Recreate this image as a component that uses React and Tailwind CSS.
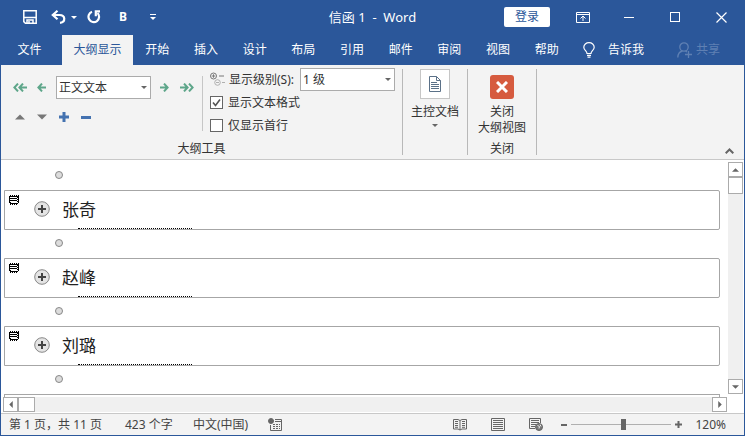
import { useState } from "react";

const TABS = ["开始", "插入", "设计", "布局", "引用", "邮件", "审阅", "视图", "帮助"];
const HEADINGS = ["张奇", "赵峰", "刘璐"];

function Triangle({ dir = "down", className = "" }) {
  const points = {
    down: "0,0 10,0 5,5",
    up: "0,5 10,5 5,0",
    left: "5,0 5,10 0,5",
    right: "0,0 0,10 5,5",
  };
  const box = dir === "left" || dir === "right" ? "0 0 5 10" : "0 0 10 5";
  return (
    <svg viewBox={box} className={className} fill="currentColor" aria-hidden="true">
      <polygon points={points[dir]} />
    </svg>
  );
}

function TitleBar() {
  const windowButton = "flex h-full w-[46px] items-center justify-center";
  return (
    <header className="grid h-[34px] grid-cols-[1fr_auto_1fr] items-center text-white">
      <div className="flex items-center pl-[22px]">
        <button aria-label="保存" className="mr-3">
          <svg className="size-[14px]" viewBox="0 0 14 14" fill="none" stroke="currentColor" strokeWidth="1.5">
            <path d="M.8.8h12.400v12.400H2.400L.8 11.600z" />
            <path d="M1 7.500h12" />
            <path d="M4 13v-3h6v3" />
            <path d="M6 11v2" />
          </svg>
        </button>
        <button aria-label="撤消" className="mr-[5px] ml-[2px]">
          <svg className="h-[14px] w-[15px]" viewBox="0 0 15 14" fill="none" stroke="currentColor" strokeWidth="2.200">
            <path d="M6.500.8 1.800 5l4.700 4.200" />
            <path d="M2 5h6.500c6 0 6.500 7 .5 7.800" />
          </svg>
        </button>
        <button aria-label="撤消选项" className="mr-[10px]">
          <Triangle className="h-[3px] w-[6px]" />
        </button>
        <button aria-label="重复" className="mr-[17px]">
          <svg className="h-[14px] w-[14px]" viewBox="0 0 14 14" fill="none" stroke="currentColor" strokeWidth="2.200">
            <path d="M5 1.800A5.300 5.300 0 1 0 10.500 3" />
            <path d="M13 1.300H8.800v5" />
          </svg>
        </button>
        <button aria-label="加粗" className="mr-[22px] w-[10px] text-[12px] leading-4 font-bold">
          B
        </button>
        <button aria-label="自定义快速访问工具栏" className="flex flex-col items-center gap-[2px]">
          <span className="h-px w-[6px] bg-white" />
          <Triangle className="h-[3px] w-[6px]" />
        </button>
      </div>
      <h1 className="text-[13px] leading-4 whitespace-pre">信函 1  -  Word</h1>
      <div className="flex h-full items-center justify-end">
        <button className="mr-[10px] h-5 w-[46px] rounded-[2px] bg-white text-[12px] leading-5 text-[#2b579a]">登录</button>
        <button aria-label="功能区显示选项" className={windowButton}>
          <svg className="h-[11px] w-[14px]" viewBox="0 0 14 11" fill="none" stroke="currentColor">
            <path d="M.5.5h13v10H.5zM.5 2.500h13M7 9V4M4.500 6.500 7 4l2.500 2.500" />
          </svg>
        </button>
        <button aria-label="最小化" className={windowButton}>
          <span className="h-px w-[10px] bg-white" />
        </button>
        <button aria-label="最大化" className={windowButton}>
          <span className="size-[10px] border border-white" />
        </button>
        <button aria-label="关闭窗口" className={windowButton}>
          <svg className="size-[11px]" viewBox="0 0 11 11" stroke="currentColor" strokeWidth="1.2">
            <path d="m.5.5 10 10M10.500.5l-10 10" />
          </svg>
        </button>
      </div>
    </header>
  );
}

function TabRow() {
  return (
    <nav className="flex h-[31px] items-stretch pt-px text-[12px] leading-4 text-white">
      <button className="w-[61px] pr-1">文件</button>
      <button className="w-[71px] bg-[#f3f3f3] text-[#2b579a]">大纲显示</button>
      <div className="grid w-[438px] grid-cols-9">
        {TABS.map((tab) => (
          <button key={tab}>{tab}</button>
        ))}
      </div>
      <button className="ml-3 flex items-center gap-[13px]">
        <svg className="h-4 w-3" viewBox="0 0 12 16" fill="none" stroke="currentColor" strokeWidth="1.2">
          <path d="M4 11.500C4 9 .8 8.200.8 5.200a5.200 4.600 0 0 1 10.400 0C11.200 8.200 8 9 8 11.500zM4 13.300h4M4.500 15.200h3" />
        </svg>
        告诉我
      </button>
      <button disabled className="mr-6 ml-auto flex items-center gap-1 text-[#5f80b3]">
        <svg className="h-4 w-[15px]" viewBox="0 0 15 16" fill="none" stroke="currentColor" strokeWidth="1.3">
          <circle cx="7" cy="5" r="4.200" />
          <path d="M.8 15.500C1 11.500 3 9.500 5.500 9M8.500 9l1.500 1M8 12.500h7M11.500 9v7" />
        </svg>
        共享
      </button>
    </nav>
  );
}

function Arrow({ double, flip, label }) {
  return (
    <button aria-label={label} className="text-[#5ea68a]">
      <svg
        className={`${double ? "w-[14px]" : "w-[9px]"} h-[9px] ${flip ? "rotate-180" : ""}`}
        viewBox={double ? "0 0 14 9" : "0 0 9 9"}
        fill="none"
        stroke="currentColor"
        strokeWidth="2"
      >
        {double ? (
          <path d="M5 .6 1.400 4.500 5 8.400M10 .6 6.400 4.500 10 8.400M6.500 4.500H14" />
        ) : (
          <path d="M5 .6 1.400 4.500 5 8.400M1.500 4.500H9" />
        )}
      </svg>
    </button>
  );
}

function Select({ id, label, options }) {
  return (
    <div className="relative">
      <select
        id={id}
        aria-label={label}
        className="block h-[23px] w-[95px] appearance-none border border-[#ababab] bg-white pl-[2px] text-[12px] leading-4 text-[#333]"
      >
        {options.map((option) => (
          <option key={option}>{option}</option>
        ))}
      </select>
      <Triangle className="pointer-events-none absolute top-[10px] right-1 h-[3px] w-[6px] text-[#666]" />
    </div>
  );
}

function Check({ label, defaultChecked }) {
  return (
    <label className="flex h-[23px] items-center gap-[5px]">
      <span className="grid size-[13px]">
        <input
          type="checkbox"
          defaultChecked={defaultChecked}
          className="peer col-start-1 row-start-1 size-[13px] appearance-none border border-[#666] bg-white"
        />
        <svg
          className="pointer-events-none invisible col-start-1 row-start-1 size-[13px] peer-checked:visible"
          viewBox="0 0 13 13"
          fill="none"
          stroke="#555"
          strokeWidth="1.600"
        >
          <path d="m3 6.500 2.500 3L10 3.500" />
        </svg>
      </span>
      {label}
    </label>
  );
}

function Ribbon() {
  return (
    <section className="flex h-[95px] border-b border-[#c8c8c8] bg-[#f3f3f3] text-[12px] leading-4 text-[#333]">
      <div className="flex w-[401px] flex-col justify-between pt-[3px] pb-[2px]">
        <div className="flex">
          <div className="flex w-[201px] flex-col gap-[13px] pt-2 pl-3">
            <div className="flex items-center">
              <Arrow double label="提升至标题 1" />
              <span className="w-[10px]" />
              <Arrow label="升级" />
              <span className="w-[10px]" />
              <Select id="outline-level" label="大纲级别" options={["正文文本", "1 级", "2 级"]} />
              <span className="w-[9px]" />
              <Arrow flip label="降级" />
              <span className="w-[11px]" />
              <Arrow double flip label="降级为正文" />
            </div>
            <div className="flex items-center gap-3 pl-[2px] text-[#777]">
              <button aria-label="上移">
                <Triangle dir="up" className="h-[6px] w-[10px]" />
              </button>
              <button aria-label="下移">
                <Triangle className="h-[6px] w-[10px]" />
              </button>
              <button aria-label="展开" className="text-[#4472b0]">
                <svg className="size-[10px]" viewBox="0 0 10 10" stroke="currentColor" strokeWidth="3">
                  <path d="M5 0v10M0 5h10" />
                </svg>
              </button>
              <button aria-label="折叠" className="flex h-[10px] items-center">
                <span className="h-[3px] w-[10px] bg-[#4472b0]" />
              </button>
            </div>
          </div>
          <div className="mt-2 h-[55px] w-px bg-[#c6c6c6]" />
          <div className="flex flex-col pl-[7px]">
            <div className="flex items-center">
              <svg className="mr-1 h-[15px] w-[15px]" viewBox="0 0 15 15" fill="none" stroke="#777">
                <circle cx="3.500" cy="4" r="3" />
                <path d="M1.800 4h3.400M3.500 2.300v3.400M9 4h5" />
                <g stroke="#b0b0b0">
                  <circle cx="7.500" cy="10.500" r="2.800" />
                  <path d="M6 10.500h3M12 10.500h3" />
                </g>
              </svg>
              <label htmlFor="show-level" className="w-[71px]">
                显示级别(S):
              </label>
              <Select id="show-level" options={["1 级", "2 级", "3 级"]} />
            </div>
            <Check label="显示文本格式" defaultChecked />
            <Check label="仅显示首行" />
          </div>
        </div>
        <p className="text-center">大纲工具</p>
      </div>
      <div className="my-1 w-px bg-[#b8b8b8]" />
      <div className="flex w-16 justify-center pt-1">
        <button className="flex flex-col items-center">
          <span className="mb-[5px] flex h-[30px] w-[30px] items-center justify-center border border-[#c6c6c6] bg-white">
            <svg className="h-4 w-3" viewBox="0 0 12 16" fill="none" stroke="#5b7188">
              <path d="M.5.5h7l4 4v11H.5zM7.500.5v4h4M2 6.500h6M2 8.500h8M2 10.500h8M2 12.500h8" />
            </svg>
          </span>
          主控文档
          <Triangle className="mt-1 h-[3px] w-[6px] text-[#666]" />
        </button>
      </div>
      <div className="my-1 w-px bg-[#b8b8b8]" />
      <div className="flex w-[68px] flex-col items-center justify-between pt-[10px] pb-[2px]">
        <button className="flex flex-col items-center">
          <span className="mb-[5px] flex size-6 items-center justify-center rounded-[3px] bg-[#d65b3f]">
            <svg className="size-3" viewBox="0 0 12 12" stroke="#fff" strokeWidth="3">
              <path d="m1 1 10 10M11 1 1 11" />
            </svg>
          </span>
          <span>关闭</span>
          <span>大纲视图</span>
        </button>
        <p>关闭</p>
      </div>
      <div className="my-1 w-px bg-[#b8b8b8]" />
      <button aria-label="折叠功能区" className="mt-auto mr-[10px] mb-[5px] ml-auto">
        <svg className="h-[6px] w-[9px]" viewBox="0 0 9 6" fill="none" stroke="#666" strokeWidth="2">
          <path d="M.7 5.300 4.500 1.500l3.800 3.800" />
        </svg>
      </button>
    </section>
  );
}

function BodyDot() {
  return <div className="ml-[51px] size-2 shrink-0 rounded-full border border-[#888] bg-[#dcdcdc]" />;
}

function Subdocument({ title }) {
  return (
    <article className="flex h-10 shrink-0 items-start rounded-r-[2px] border border-[#a6a6a6] pl-1">
      <svg className="mt-1 h-[10px] w-[10px]" viewBox="0 0 10 10" fill="none" stroke="#000" shapeRendering="crispEdges">
        <path d="M1 .5h9M1 9.500h8" strokeDasharray="1 1" />
        <path d="M0 1.500h10M.5 1v7M9.500 1v7M2 3.500h6M2 5.500h6M1 8.500h8" />
        <path d="M1.500 1v8M8.500 2v7" strokeDasharray="1 1" />
      </svg>
      <button aria-label={`展开 ${title}`} className="mt-[10px] ml-[15px] size-4">
        <svg viewBox="0 0 16 16" fill="#e4e4e4" stroke="#888">
          <circle cx="8" cy="8" r="7.300" />
          <path d="M8 4v8M4 8h8" stroke="#444" strokeWidth="2" />
        </svg>
      </button>
      <div className="flex h-full flex-col">
        <h2 className="mt-[7px] ml-3 text-[17px] leading-6 font-normal text-[#222]">{title}</h2>
        <div className="mt-auto ml-7 w-[114px] border-b border-dotted border-black" />
      </div>
    </article>
  );
}

function ScrollButton({ dir, label }) {
  const vertical = dir === "up" || dir === "down";
  return (
    <button
      aria-label={label}
      className="flex size-[15px] shrink-0 items-center justify-center border border-[#ababab] bg-white text-[#666]"
    >
      <Triangle dir={dir} className={vertical ? "h-[4px] w-[7px]" : "h-[7px] w-[4px]"} />
    </button>
  );
}

function DocumentView() {
  return (
    <main className="flex min-h-0 flex-1 flex-col bg-white">
      <div className="flex min-h-0 flex-1">
        <div className="mr-2 ml-[3px] flex flex-1 flex-col overflow-hidden pt-[11px]">
          {HEADINGS.map((title) => (
            <div key={title} className="mb-[9px] flex shrink-0 flex-col gap-[11px]">
              <BodyDot />
              <Subdocument title={title} />
            </div>
          ))}
          <BodyDot />
          <div className="mt-[11px] flex-1 border-x border-t border-[#a6a6a6]" />
        </div>
        <div className="mt-[2px] mr-px mb-[3px] flex w-[15px] flex-col bg-[#f0f0f0]">
          <ScrollButton dir="up" label="向上滚动" />
          <div className="h-[17px] border border-[#ababab] bg-white" />
          <div className="flex-1" />
          <ScrollButton dir="down" label="向下滚动" />
        </div>
      </div>
      <div className="mr-[17px] mb-px ml-[2px] flex h-[15px] bg-[#f0f0f0]">
        <ScrollButton dir="left" label="向左滚动" />
        <div className="w-[17px] border border-[#ababab] bg-white" />
        <div className="flex-1" />
        <ScrollButton dir="right" label="向右滚动" />
      </div>
    </main>
  );
}

function StatusBar() {
  const [zoom, setZoom] = useState(120);
  return (
    <footer className="flex h-[22px] items-center border-t border-[#c8c8c8] bg-[#f3f3f3] pr-[18px] pl-2 text-[12px] leading-4 whitespace-nowrap text-[#444]">
      <span className="w-[116px]">第 1 页，共 11 页</span>
      <span className="w-[68px]">423 个字</span>
      <span className="w-[75px]">中文(中国)</span>
      <button aria-label="宏录制">
        <svg className="h-[13px] w-[14px]" viewBox="0 0 14 13" fill="none" stroke="#666">
          <path d="M7 1.500h6.500v11h-11V7" />
          <path d="M7 3.500h6" />
          <path d="M5 6.500h7M5 8.500h7M5 10.500h7" strokeDasharray="2 1" />
          <circle cx="3" cy="3" r="2.500" fill="#666" />
        </svg>
      </button>
      <div className="mr-[18px] ml-auto flex items-center gap-6 text-[#666]">
        <button aria-label="阅读视图">
          <svg className="h-[13px] w-[14px]" viewBox="0 0 14 13" fill="none" stroke="currentColor">
            <path d="M.5 1.500H5l2 1 2-1h4.500v9.500H9l-2 1-2-1H.5zM7 2.500V12M2 3.500h3M2 5.500h3M2 7.500h3M2 9.300h3M9 3.500h3M9 5.500h3M9 7.500h3M9 9.300h3" />
          </svg>
        </button>
        <button aria-label="页面视图">
          <svg className="h-[13px] w-[14px]" viewBox="0 0 14 13" fill="none" stroke="currentColor">
            <path d="M.5.5h13v12H.5zM2 2.500h10M2 4.500h10M2 6.500h10M2 8.500h10M2 10.500h10" />
          </svg>
        </button>
        <button aria-label="Web 版式视图">
          <svg className="h-[13px] w-[14px]" viewBox="0 0 14 13" fill="none" stroke="currentColor">
            <path d="M6 10.500H.5V.5h11V5M2 2.500h8M2 4.500h8M2 6.500h5M2 8.500h4" />
            <circle cx="10" cy="9" r="3.500" fill="#777" />
            <path d="m8.500 7.500 2 1-.5 2M11 6.500l1 2" stroke="#eee" />
          </svg>
        </button>
      </div>
      <button
        aria-label="缩小"
        onClick={() => setZoom(Math.max(10, zoom - 10))}
        className="mr-1 flex h-4 items-center"
      >
        <span className="h-[2px] w-[6px] bg-[#666]" />
      </button>
      <input
        type="range"
        aria-label="显示比例"
        min="10"
        max="220"
        value={zoom}
        onChange={(e) => setZoom(Number(e.target.value))}
        className="h-4 w-[100px] appearance-none bg-transparent [&::-webkit-slider-runnable-track]:h-px [&::-webkit-slider-runnable-track]:bg-[#b0b0b0] [&::-webkit-slider-thumb]:mt-[-5px] [&::-webkit-slider-thumb]:h-[11px] [&::-webkit-slider-thumb]:w-[5px] [&::-webkit-slider-thumb]:appearance-none [&::-webkit-slider-thumb]:bg-[#666]"
      />
      <button aria-label="放大" onClick={() => setZoom(Math.min(220, zoom + 10))} className="mr-3 ml-1">
        <svg className="size-[7px]" viewBox="0 0 7 7" stroke="#666" strokeWidth="2">
          <path d="M3.500 0v7M0 3.500h7" />
        </svg>
      </button>
      <output className="w-8 text-right">{zoom}%</output>
    </footer>
  );
}

export default function App() {
  return (
    <div className="flex h-screen flex-col border-x border-b border-[#2b579a] bg-[#2b579a] font-['Noto_Sans','Noto_Sans_CJK_SC',sans-serif]">
      <TitleBar />
      <TabRow />
      <Ribbon />
      <DocumentView />
      <StatusBar />
    </div>
  );
}
